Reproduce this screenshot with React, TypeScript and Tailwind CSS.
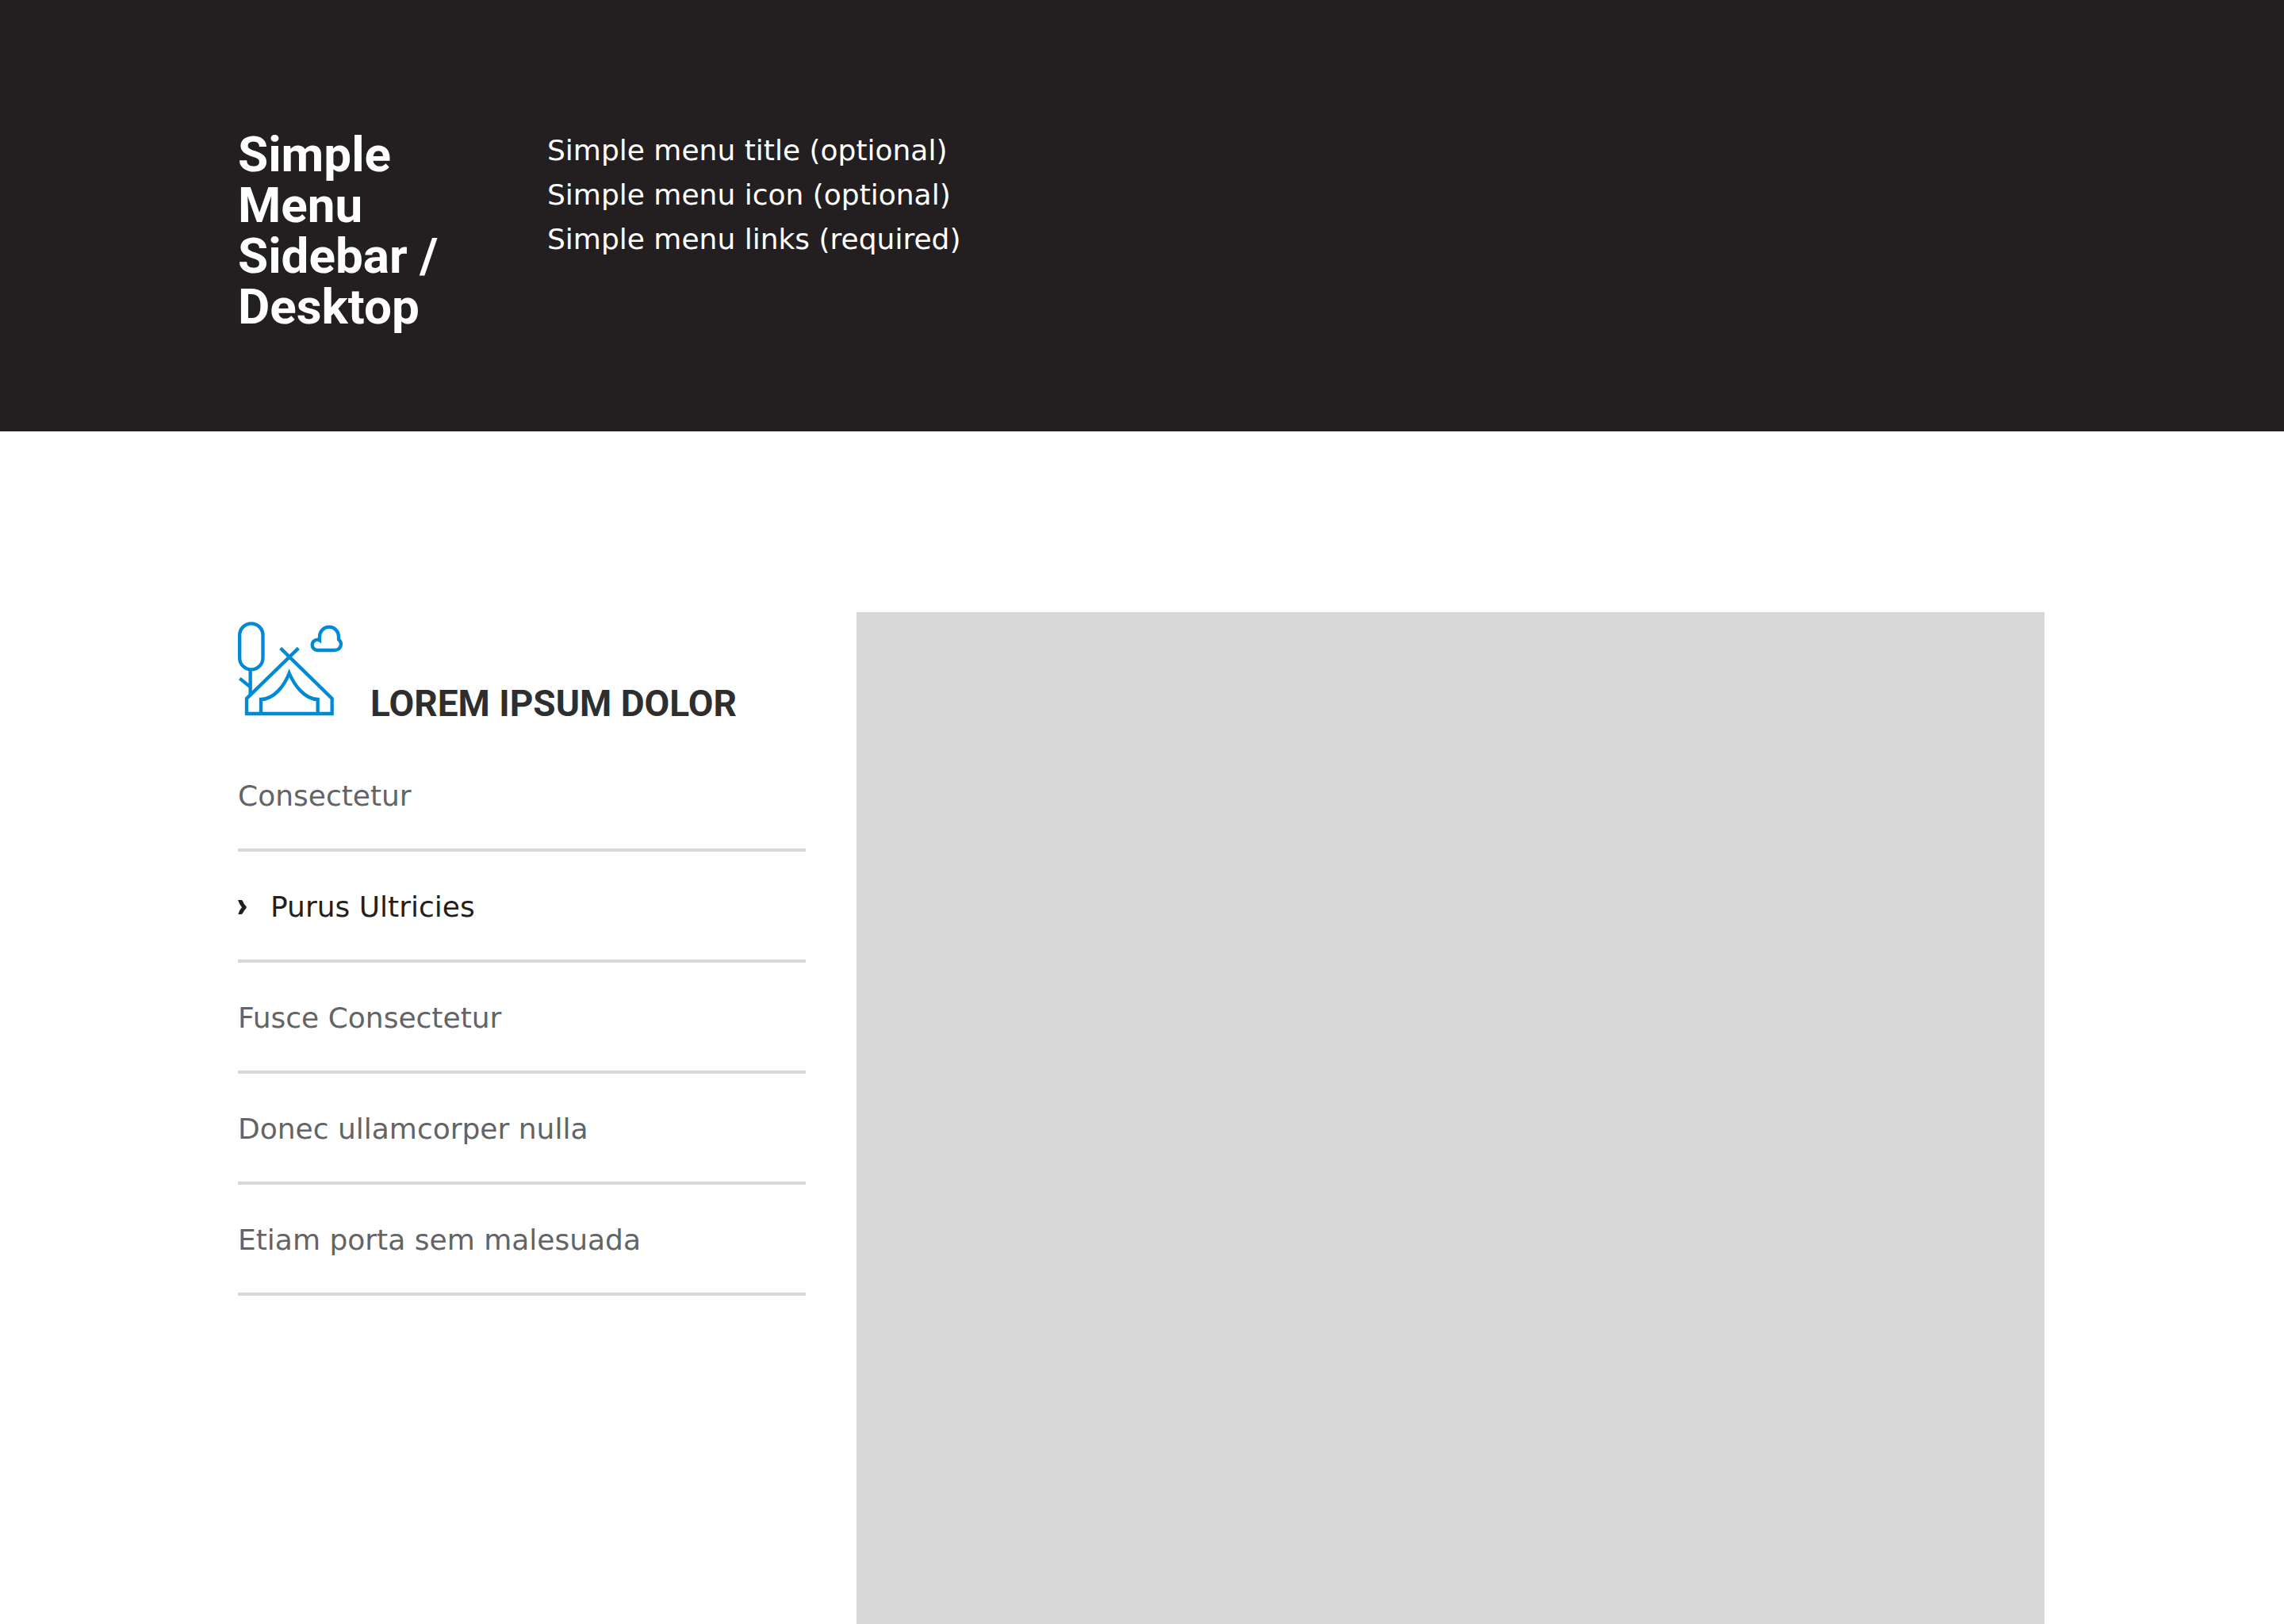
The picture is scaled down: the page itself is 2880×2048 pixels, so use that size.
const notes = [
  'Simple menu title (optional)',
  'Simple menu icon (optional)',
  'Simple menu links (required)',
];

const links = [
  { label: 'Consectetur' },
  { label: 'Purus Ultricies', current: true },
  { label: 'Fusce Consectetur' },
  { label: 'Donec ullamcorper nulla' },
  { label: 'Etiam porta sem malesuada' },
];

function CampIcon() {
  return (
    <svg
      className="h-[119px] w-[133px] shrink-0"
      viewBox="60 42 399 357"
      fill="none"
      stroke="#008ad6"
      strokeWidth="13"
      strokeMiterlimit="10"
      aria-hidden="true"
    >
      <rect x="66.5" y="49" width="88" height="174" rx="44" />
      <path d="M107 222V322M67 257L107 289" />
      <path d="M289 142L93 333V390H416V333L221 142" />
      <path d="M147 390V336C196 336 236 284 254 237C274 284 314 336 362 336V390" />
      <path d="M361 150A20 20 0 0 1 361 110Q366 110 369 112V98A36 36 0 0 1 441 98V109C447 114 450 120 450 127C450 140 440 150 427 150Z" />
    </svg>
  );
}

function Chevron() {
  return (
    <svg className="h-[18px] w-[11px] shrink-0" viewBox="0 0 33 54" fill="currentColor" aria-hidden="true">
      <path d="M0 0H13Q16 0 18 4Q22 16 32 25V30Q25 37 19 49Q16 54 13 54H1Q5 38 15 28Q6 18 0 0Z" />
    </svg>
  );
}

export default function App() {
  return (
    <div className="flex min-h-screen flex-col bg-white font-['DejaVu_Sans',sans-serif] text-4xl">
      <header className="flex min-h-[544px] gap-[70px] bg-[#231f20] pt-[162px] pr-[302px] pb-30 pl-75 text-white">
        <h1 className="w-80 shrink-0 pt-px font-['Roboto',sans-serif] text-[62px] leading-16 font-bold">
          Simple Menu Sidebar / Desktop
        </h1>
        <ul>
          {notes.map((note) => (
            <li key={note} className="leading-14">
              {note}
            </li>
          ))}
        </ul>
      </header>
      <main className="grid flex-1 grid-cols-[716fr_1498fr] gap-16 pt-57 pr-[302px] pl-75">
        <nav aria-labelledby="menu-title" className="pt-3">
          <div className="mb-[31px] flex items-end gap-[34px]">
            <CampIcon />
            <h2
              id="menu-title"
              className="font-['Roboto',sans-serif] text-[46px] leading-8 font-bold whitespace-nowrap text-[#2e2e2e] uppercase"
            >
              Lorem Ipsum Dolor
            </h2>
          </div>
          <ul>
            {links.map((link) => (
              <li key={link.label} className="border-b-4 border-[#d8d8d8]">
                <a
                  href="#"
                  aria-current={link.current ? 'page' : undefined}
                  className={
                    link.current
                      ? 'flex h-34 items-center gap-[30px] pt-1 text-[#231f20]'
                      : 'flex h-34 items-center pt-1 text-[#636466]'
                  }
                >
                  {link.current && <Chevron />}
                  {link.label}
                </a>
              </li>
            ))}
          </ul>
        </nav>
        <section aria-label="Content" className="bg-[#d8d8d8]" />
      </main>
    </div>
  );
}
